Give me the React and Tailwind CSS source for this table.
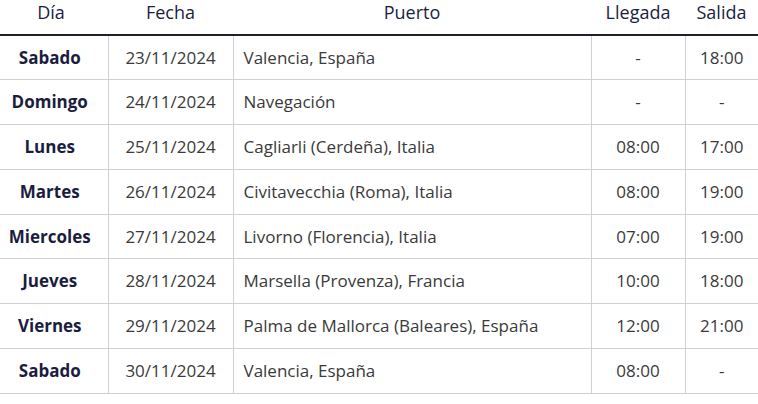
import React from "react";

const rows = [
  ["Sabado", "23/11/2024", "Valencia, España", "-", "18:00"],
  ["Domingo", "24/11/2024", "Navegación", "-", "-"],
  ["Lunes", "25/11/2024", "Cagliarli (Cerdeña), Italia", "08:00", "17:00"],
  ["Martes", "26/11/2024", "Civitavecchia (Roma), Italia", "08:00", "19:00"],
  ["Miercoles", "27/11/2024", "Livorno (Florencia), Italia", "07:00", "19:00"],
  ["Jueves", "28/11/2024", "Marsella (Provenza), Francia", "10:00", "18:00"],
  ["Viernes", "29/11/2024", "Palma de Mallorca (Baleares), España", "12:00", "21:00"],
  ["Sabado", "30/11/2024", "Valencia, España", "08:00", "-"],
];

export default function App() {
  return (
    <div className="w-[758px] h-[404px] bg-white pt-[1px]" style={{ fontFamily: '"Open Sans", sans-serif' }}>
      <table className="w-[758px] table-fixed border-collapse text-[17px]">
        <colgroup>
          <col className="w-[108px]" />
          <col className="w-[125px]" />
          <col className="w-[358px]" />
          <col className="w-[94px]" />
          <col className="w-[73px]" />
        </colgroup>
        <thead>
          <tr className="h-[34px] border-b-2 border-[#1f1f2e]">
            <th className="font-normal text-[18px] text-[#1b1d40] text-center align-top pt-0 pr-[6px] leading-[22px]">Día</th>
            <th className="font-normal text-[18px] text-[#1b1d40] text-center align-top pt-0 leading-[22px]">Fecha</th>
            <th className="font-normal text-[18px] text-[#1b1d40] text-center align-top pt-0 leading-[22px]">Puerto</th>
            <th className="font-normal text-[18px] text-[#1b1d40] text-center align-top pt-0 leading-[22px]">Llegada</th>
            <th className="font-normal text-[18px] text-[#1b1d40] text-center align-top pt-0 leading-[22px]">Salida</th>
          </tr>
        </thead>
        <tbody>
          {rows.map((r, i) => (
            <tr key={i} className="h-[44.75px] border-b border-[#cfcfd4]">
              <td className="text-center pr-[8px] font-bold text-[#1b1d40] border-r border-[#cfcfd4]">{r[0]}</td>
              <td className="text-center text-[#3a3a3a] border-r border-[#cfcfd4]">{r[1]}</td>
              <td className="text-left pl-[10px] text-[#3a3a3a] border-r border-[#cfcfd4]">{r[2]}</td>
              <td className="text-center text-[#3a3a3a] border-r border-[#cfcfd4]">{r[3]}</td>
              <td className="text-center text-[#3a3a3a]">{r[4]}</td>
            </tr>
          ))}
        </tbody>
      </table>
    </div>
  );
}
